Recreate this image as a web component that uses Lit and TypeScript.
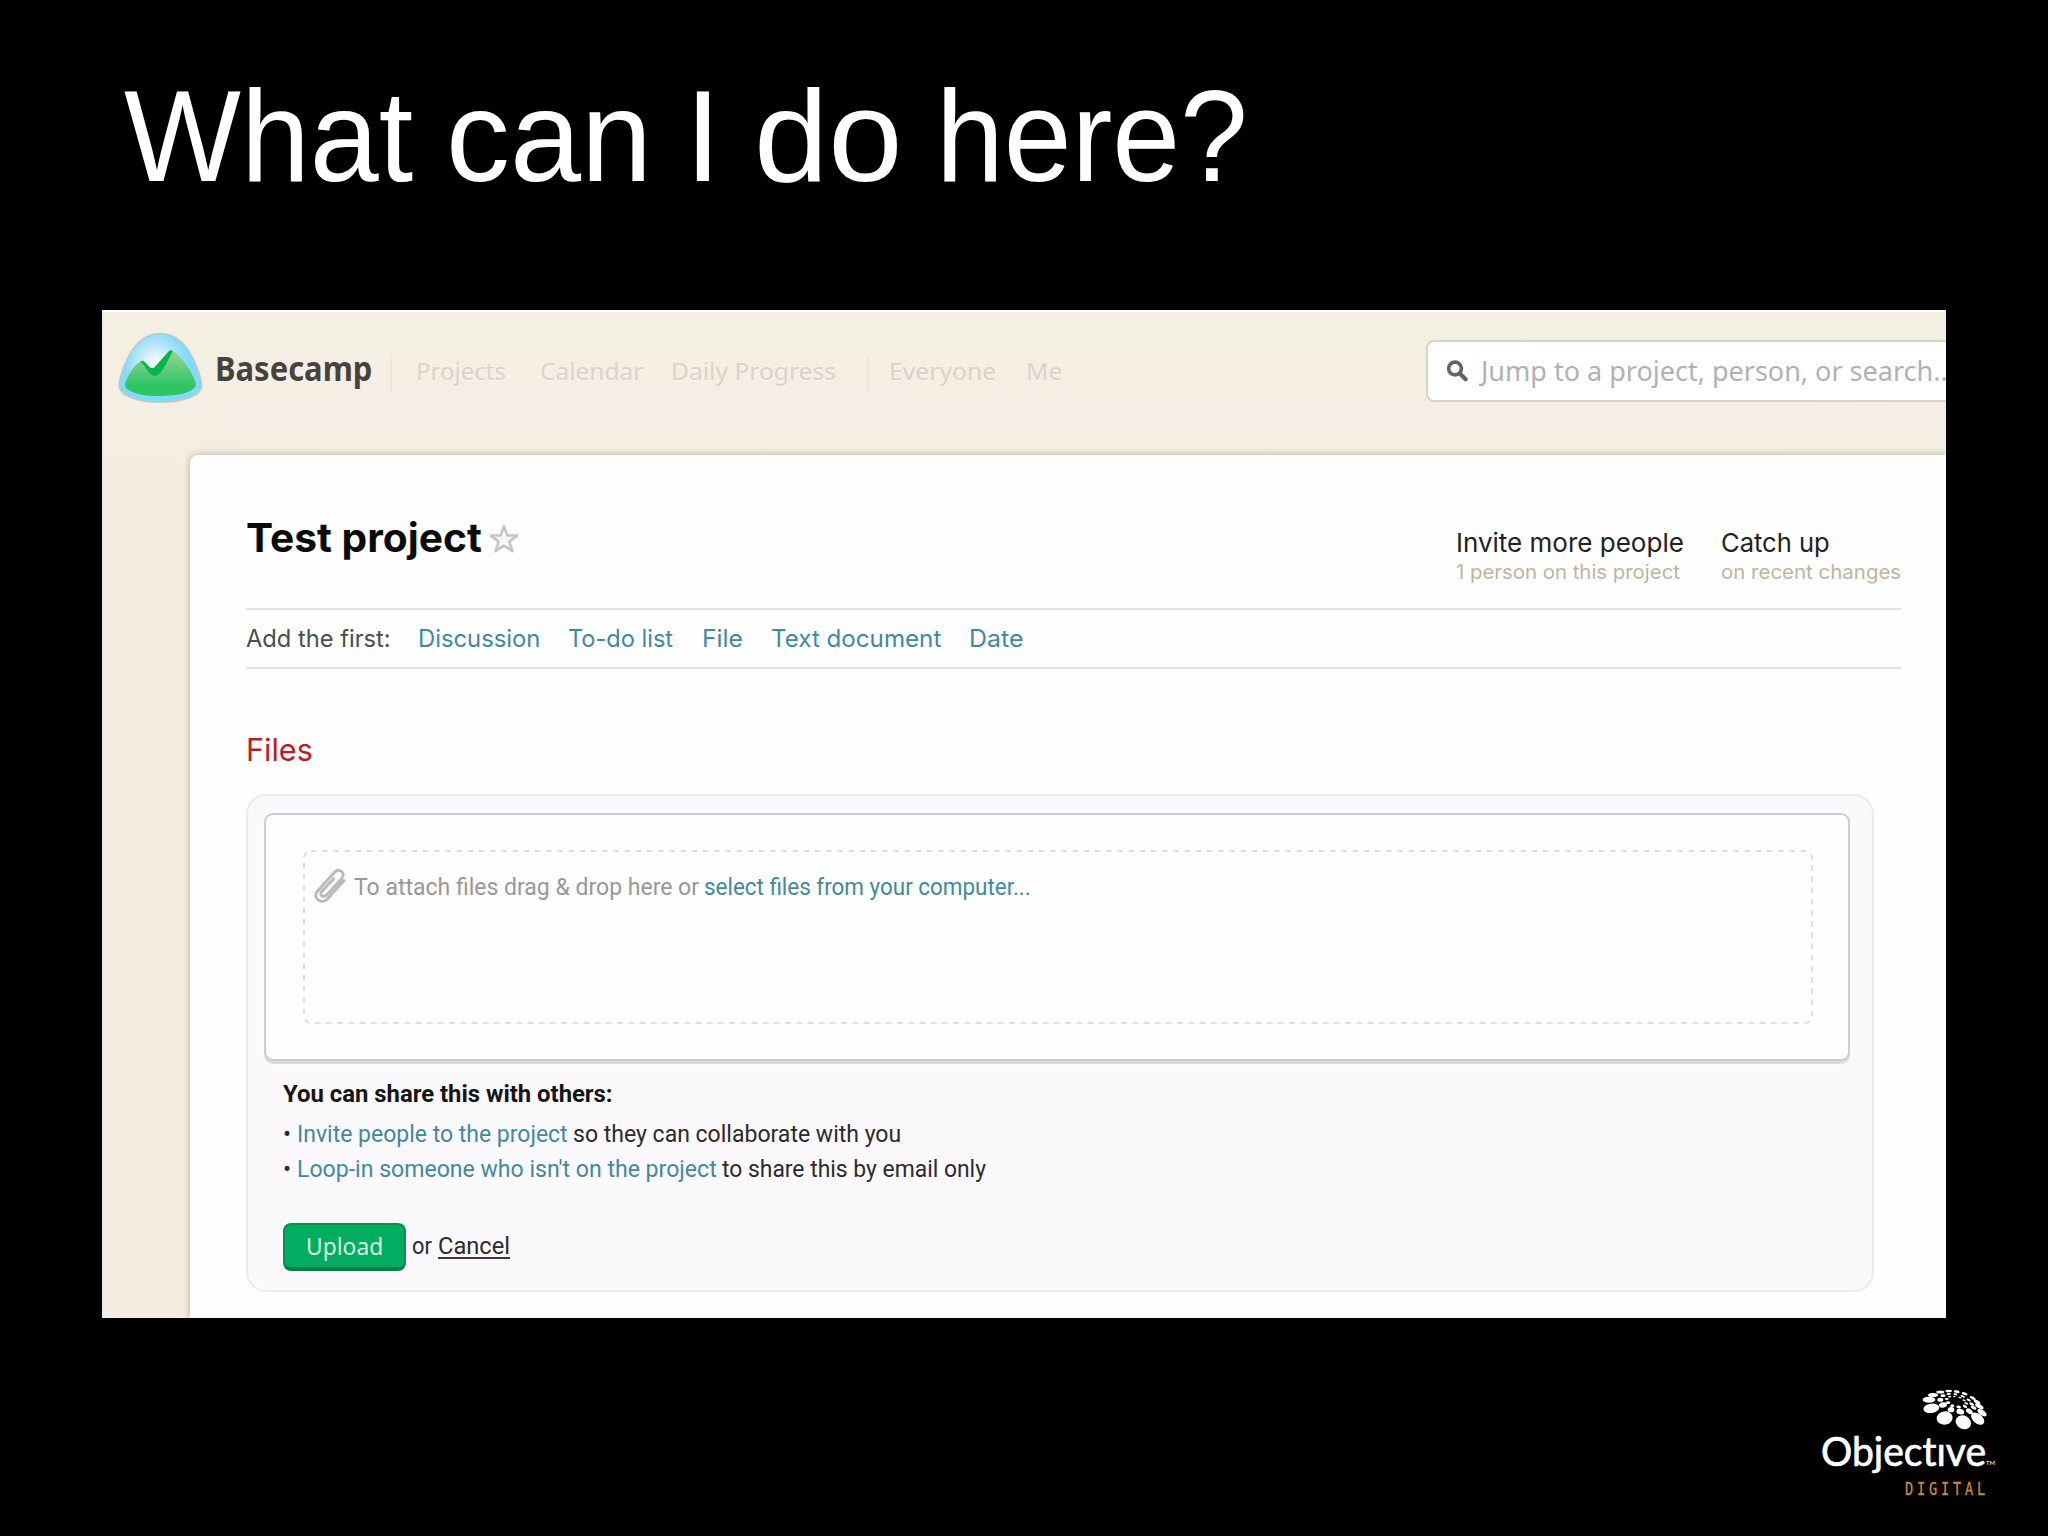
import { LitElement, html, css, svg } from "lit";
import { customElement, property } from "lit/decorators.js";

/** One line of text condensed or widened to an exact measure. */
@customElement("fit-text")
class FitText extends LitElement {
  @property({ type: Number }) measure = 0;

  static styles = css`
    :host { display: inline-block; white-space: pre; }
    .line { display: inline-block; transform-origin: 0 50%; }
  `;

  firstUpdated() {
    this.fit();
    document.fonts.ready.then(() => this.fit());
  }

  fit() {
    const line = this.renderRoot.querySelector(".line") as HTMLElement;
    const natural = line.offsetWidth;
    if (!natural) return;
    this.style.width = `${this.measure}px`;
    line.style.transform = `scaleX(${this.measure / natural})`;
  }

  render() {
    return html`<span class="line"><slot></slot></span>`;
  }
}

const fit = (text: string, measure: number, cls = "") =>
  html`<fit-text class=${cls} .measure=${measure}>${text}</fit-text>`;

const basecampLogo = svg`
  <svg class="bc-logo" viewBox="0 0 255 216" width="85" height="72">
    <defs>
      <radialGradient id="sky" gradientUnits="userSpaceOnUse" cx="112" cy="92" r="95">
        <stop offset="0" stop-color="#ffffff"/><stop offset=".35" stop-color="#d6edfb"/><stop offset="1" stop-color="#82dafb"/>
      </radialGradient>
      <linearGradient id="hill" x1="0" y1="0" x2="0" y2="1">
        <stop offset="0" stop-color="#9ad592"/><stop offset=".45" stop-color="#5cca79"/><stop offset=".8" stop-color="#2cc562"/>
      </linearGradient>
    </defs>
    <path d="M127 4C180 4 213 48 232 93C242 117 253 144 251 163C247 194 192 211 127 211C62 211 7 194 3 163C1 144 12 117 22 93C41 48 74 4 127 4Z" fill="url(#sky)" stroke="#cbc6bd" stroke-width="4"/>
    <path d="M70 88C78 85 84 96 92 104C100 112 108 112 116 102L152 60C157 54 162 54 167 58C194 79 219 115 231 146C235 156 234 164 228 169C209 186 170 192 127 192C85 192 46 186 27 170C20 164 20 156 24 147C34 122 52 95 70 88Z" fill="url(#hill)"/>
    <path d="M66 88C76 81 84 95 92 103C100 112 107 110 115 100L151 59C155 54 160 53 164 57C155 76 140 107 126 124C118 133 106 134 97 126C84 114 79 95 66 88Z" fill="#05b44a"/>
  </svg>`;

const searchIcon = svg`
  <svg class="search-icon" viewBox="0 0 22 22" width="22" height="22">
    <circle cx="9" cy="8.5" r="6.4" fill="none" stroke="#646464" stroke-width="3.6"/>
    <path d="M13.8 13.4L19.6 19.2" stroke="#646464" stroke-width="4.2" stroke-linecap="round"/>
  </svg>`;

const starIcon = svg`
  <svg class="star" viewBox="0 0 30 30" width="30" height="30">
    <path d="M15 2.2L18.3 11.4L28.2 11.6L20.4 17.6L23.4 27.2L15 21.6L6.6 27.2L9.6 17.6L1.8 11.6L11.7 11.4Z" fill="#f6f6f7" stroke="#c6c6c9" stroke-width="2.6" stroke-linejoin="round"/>
  </svg>`;

const clipIcon = svg`
  <svg class="clip" viewBox="0 0 32 36" width="32" height="36">
    <path d="M30 12.5L13.4 31C7.2 37 -1.8 30 3.4 23.2L20.6 4.2C25.6 -.6 32 5 27.8 10.4L12.4 27.2C9 30.2 5 27 7.8 23.4L19.6 10.8" fill="none" stroke="#bbb9bc" stroke-width="2.9" stroke-linecap="round" stroke-linejoin="round"/>
  </svg>`;

// x, y, rx, ry, rotation
const petals = [
  [49, 79, 24, 14, -8], [89, 108, 24, 20, -10], [145, 121, 24, 20, 30], [188, 110, 23, 14, 40],
  [201, 92, 16, 8, 35], [193, 73, 14, 6, 30], [42, 53, 19, 9, 0], [54, 39, 15, 6, 0], [76, 30, 12, 4.5, 0],
  [101, 27, 10, 4, 0], [125, 29, 9, 4, 10], [149, 35, 9, 4, 20], [173, 48, 10, 4.5, 25], [186, 60, 11, 5, 28],
  [84, 69, 12, 8, -10], [108, 83, 10, 8, 0], [136, 89, 12, 8, 15], [163, 88, 11, 7, 35], [176, 77, 9, 5, 30],
  [76, 53, 9, 6, 0], [84, 41, 8, 4, 0], [101, 36, 7, 3.2, 0], [121, 37, 6, 3, 10], [143, 43, 7, 3, 20],
  [161, 54, 7, 3.6, 25], [170, 66, 8, 4, 30], [99, 62, 7, 4, 0], [112, 71, 6, 4.5, 0], [131, 75, 7, 4.5, 10],
  [150, 73, 7, 4, 30], [154, 64, 6, 3, 20], [95, 51, 6, 3, 0], [104, 44, 5, 2.4, 0], [118, 43, 4, 2, 0],
  [135, 47, 5, 2.2, 20], [147, 55, 5, 2.4, 20],
];

const flower = svg`
  <svg class="flower" viewBox="0 0 240 156" width="80" height="52">
    ${petals.map(([x, y, rx, ry, a]) => svg`<ellipse cx=${x} cy=${y} rx=${rx} ry=${ry} transform=${`rotate(${a} ${x} ${y})`} fill="#fff"/>`)}
  </svg>`;

@customElement("app-root")
class AppRoot extends LitElement {
  static styles = css`
    :host { display: block; }
    .slide { box-sizing: border-box; width: 2048px; height: 1536px; overflow: hidden; background: #000; padding-top: 66px; display: flex; flex-direction: column; }
    h1, h2, h3, p { margin: 0; font-weight: 400; }
    .title { height: 140px; margin-left: 124px; display: flex; gap: 33px; font: 129px/140px "Liberation Sans", sans-serif; color: #fff; }

    .shot { box-sizing: border-box; width: 1844px; height: 1008px; margin: 104px 0 0 102px; overflow: hidden; background: linear-gradient(90deg, #f3eee1, #f5eee4 14%, #f5efe4); border-top: 2px solid #fdfbf7; border-left: 1px solid #e9e6df; display: flex; flex-direction: column; }

    .header { flex: none; height: 143px; display: grid; grid-template-columns: 97px 175px 26px 124px 131px 196px 22px 137px 400px 1fr; padding-left: 15px; align-items: start; background: linear-gradient(180deg, rgba(243, 240, 226, .8), rgba(246, 237, 229, .5) 75%, rgba(243, 239, 226, .8)); }
    .bc-logo { margin-top: 20px; }
    .brand { font: 700 34.5px/40px "Noto Sans", sans-serif; color: #48423c; margin-top: 36px; text-shadow: 0 1px 0 #fff; }
    .nav { font: 24px/40px "Noto Sans", sans-serif; color: #d9d3c9; margin-top: 39px; text-shadow: 0 1px 0 #fbf7ef; }
    .bar { width: 2px; height: 38px; margin-top: 43px; background: #ece7dc; }
    .search { box-sizing: border-box; height: 62px; margin-top: 28px; border: 2px solid #d9d3c6; border-right: 0; border-radius: 8px 0 0 8px; background: #fff; display: flex; align-items: center; padding-left: 18px; overflow: hidden; white-space: nowrap; font: 27px/56px "Noto Sans", sans-serif; color: #b1b1b5; }
    .search-icon { flex: none; margin-right: 13px; }

    .panel { flex: 1; margin-left: 87px; background: #fefefe; border-top-left-radius: 8px; box-shadow: 0 0 6px 1px rgba(125, 115, 85, .42); padding-left: 56px; font-family: "Inter", sans-serif; }
    .rows { width: 1655px; }
    .head { box-sizing: border-box; height: 155px; padding-top: 59px; display: flex; align-items: flex-start; border-bottom: 2px solid #e0e2e4; }
    .project { font: 700 40px/48px "Inter", sans-serif; color: #0a0a0a; }
    .star { margin: 10px 0 0 7px; }
    .actions { margin: 14px 1px 0 auto; display: flex; gap: 39px; }
    .action { display: flex; flex-direction: column; width: 226px; }
    .action.short { width: 179px; }
    .verb { font-size: 26px; line-height: 30px; color: #222; }
    .note { font-size: 20px; line-height: 28px; color: #bfb4a2; }
    .adds { display: grid; grid-template-columns: 172px 150px 134px 69px 198px 1fr; font-size: 24px; line-height: 57px; height: 57px; border-bottom: 2px solid #dfe2e4; color: #4c4c4c; }
    .link { color: #4189a0; }
    .files { font-size: 31px; line-height: 40px; margin-top: 61px; height: 40px; color: #bf1b1e; }

    .box { box-sizing: border-box; width: 1628px; height: 498px; margin-top: 24px; border: 2px solid #eceaed; border-radius: 20px; background: #fbf9fc; padding: 17px 16px; font: 24px/35px "Roboto", sans-serif; color: #2b2b2d; }
    .drop { box-sizing: border-box; width: 1586px; height: 248px; border: 2px solid #cfccd1; border-radius: 9px; background: #fefefe; box-shadow: 0 3px 1px #dddade; padding: 35px 37px; }
    .dashed { height: 174px; width: 1510px; overflow: visible; display: grid; }
    .dashed > * { grid-area: 1 / 1; }
    .outline { width: 1510px; height: 174px; }
    .attach { display: flex; align-items: flex-start; padding: 19px 0 0 11px; color: #98979a; line-height: 36px; height: 36px; }
    .clip { margin: -1px 8px 0 0; }
    .attach .link { margin-left: 5px; color: #418a9e; }
    .share { padding: 15px 0 0 19px; }
    .share h3 { height: 41px; line-height: 36px; font-size: 24px; font-weight: 700; color: #151515; }
    .row { display: flex; height: 35px; gap: 5px; }
    .bullet { width: 9px; }
    .submit { display: flex; margin-top: 36px; gap: 6px; line-height: 47px; }
    .upload { box-sizing: border-box; width: 123px; height: 48px; border: 2px solid #079152; border-bottom: 4px solid #048044; border-radius: 8px; background: #02ac60; color: #d9f7e6; font: 24px/42px "Noto Sans", sans-serif; padding-left: 21px; }
    .cancel { height: 34px; border-bottom: 2px solid #3b3b3d; }

    .footer { margin: 64px 0 0 1821px; width: 180px; display: flex; flex-direction: column; }
    .flower { margin-left: 94px; }
    .objective { display: flex; align-items: flex-end; margin-top: -8px; height: 50px; color: #fff; font: 40px/50px "Lato", sans-serif; font-variant-ligatures: none; -webkit-text-stroke: .7px #fff; }
    .tm { font: 6px/27px "Lato", sans-serif; -webkit-text-stroke: 0; }
    .digital { margin: -1px 0 0 84px; font: 18px/28px "DejaVu Sans Mono", monospace; letter-spacing: 5px; color: #cf893c; -webkit-text-stroke: .3px #cf893c; }
  `;

  render() {
    return html`
      <main class="slide">
        <h1 class="title">${fit("What", 289)} ${fit("can", 206)} ${fit("I", 36)} ${fit("do", 149)} ${fit("here?", 312)}</h1>
        <section class="shot">
          <header class="header">
            ${basecampLogo}
            ${fit("Basecamp", 157, "brand")}
            <span class="bar"></span>
            ${fit("Projects", 90, "nav")}
            ${fit("Calendar", 103, "nav")}
            ${fit("Daily Progress", 165, "nav")}
            <span class="bar"></span>
            ${fit("Everyone", 107, "nav")}
            ${fit("Me", 36, "nav")}
            <div class="search">${searchIcon}<span>Jump to a project, person, or search...</span></div>
          </header>
          <div class="panel">
            <div class="rows">
              <div class="head">
                <h2 class="project">${fit("Test project", 236)}</h2>
                ${starIcon}
                <div class="actions">
                  <div class="action">${fit("Invite more people", 228, "verb")}${fit("1 person on this project", 224, "note")}</div>
                  <div class="action short">${fit("Catch up", 109, "verb")}${fit("on recent changes", 180, "note")}</div>
                </div>
              </div>
              <div class="adds">
                ${fit("Add the first:", 145)}
                ${fit("Discussion", 122, "link")}
                ${fit("To-do list", 105, "link")}
                ${fit("File", 41, "link")}
                ${fit("Text document", 170, "link")}
                ${fit("Date", 54, "link")}
              </div>
            </div>
            <h2 class="files">${fit("Files", 67)}</h2>
            <div class="box">
              <div class="drop">
                <div class="dashed">
                  <svg class="outline" viewBox="0 0 1510 174">
                    <rect x="1" y="1" width="1508" height="172" rx="7" fill="none" stroke="#e0dee2" stroke-width="2" stroke-dasharray="5.6 5.6"/>
                  </svg>
                  <div class="attach">
                    ${clipIcon}
                    ${fit("To attach files drag & drop here or", 345)}
                    ${fit("select files from your computer...", 327, "link")}
                  </div>
                </div>
              </div>
              <div class="share">
                <h3>${fit("You can share this with others:", 330)}</h3>
                <div class="row"><span class="bullet">•</span>${fit("Invite people to the project", 271, "link")}${fit("so they can collaborate with you", 328)}</div>
                <div class="row"><span class="bullet">•</span>${fit("Loop-in someone who isn't on the project", 420, "link")}${fit("to share this by email only", 264)}</div>
                <div class="submit"><span class="upload">${fit("Upload", 77)}</span>${fit("or", 20)}<span class="cancel">${fit("Cancel", 72)}</span></div>
              </div>
            </div>
          </div>
        </section>
        <footer class="footer">
          ${flower}
          <div class="objective">${fit("Objectıve", 165)}<span class="tm">TM</span></div>
          ${fit("DIGITAL", 84, "digital")}
        </footer>
      </main>
    `;
  }
}
